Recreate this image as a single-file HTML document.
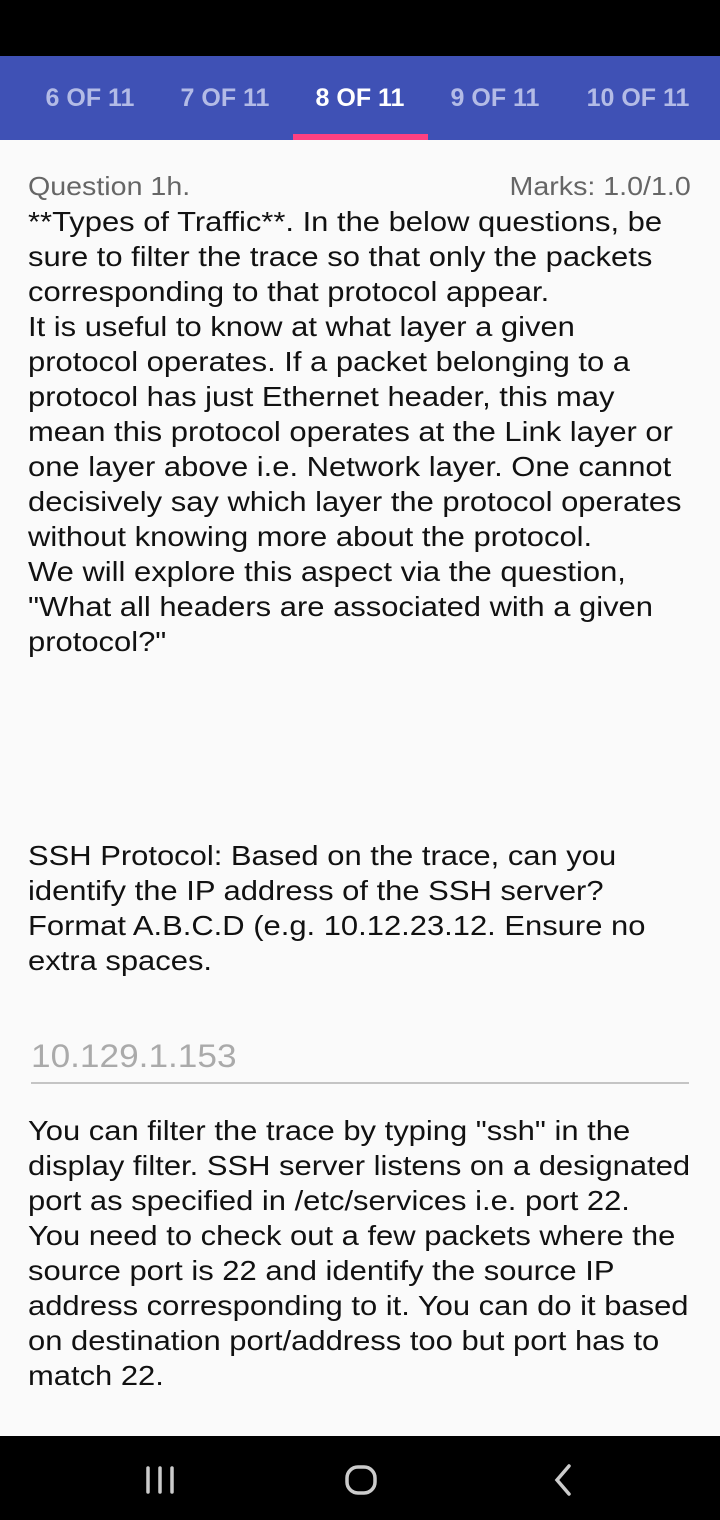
<!DOCTYPE html>
<html><head><style>
*{margin:0;padding:0;box-sizing:border-box}
body{width:720px;height:1520px;background:#fafafa;position:relative;overflow:hidden;font-family:"Liberation Sans",sans-serif}
.top{position:absolute;left:0;top:0;width:720px;height:56px;background:#000}
.tabs{position:absolute;left:0;top:56px;width:720px;height:84px;background:#3f51b5}
.tab{position:absolute;top:0;height:84px;line-height:84px;font-size:25px;color:#b3bbe6;font-weight:bold;transform:translateX(-50%);white-space:nowrap}
.tab.on{color:#fff}
.ind{position:absolute;left:293px;top:134px;width:135px;height:6px;background:#ff4081}
.l{position:absolute;left:28px;font-size:28px;line-height:35px;color:#111;white-space:nowrap;transform-origin:0 50%;transform:scaleX(1.105)}
.g{color:#666;font-size:26px;transform:scaleX(1.1)}
.r{transform-origin:100% 50%}
.nav{position:absolute;left:0;top:1436px;width:720px;height:84px;background:#000}
</style></head><body>
<div class="top"></div>
<div class="tabs">
<div class="tab" style="left:90px">6 OF 11</div>
<div class="tab" style="left:225px">7 OF 11</div>
<div class="tab on" style="left:360px">8 OF 11</div>
<div class="tab" style="left:495px">9 OF 11</div>
<div class="tab" style="left:638px">10 OF 11</div>
</div>
<div class="ind"></div>
<div class="l g" style="top:169px">Question 1h.</div>
<div class="l g r" style="top:169px;left:auto;right:29px">Marks: 1.0/1.0</div>
<div class="l" style="top:204px">**Types of Traffic**. In the below questions, be</div>
<div class="l" style="top:239px">sure to filter the trace so that only the packets</div>
<div class="l" style="top:274px">corresponding to that protocol appear.</div>
<div class="l" style="top:309px">It is useful to know at what layer a given</div>
<div class="l" style="top:344px">protocol operates. If a packet belonging to a</div>
<div class="l" style="top:379px">protocol has just Ethernet header, this may</div>
<div class="l" style="top:414px">mean this protocol operates at the Link layer or</div>
<div class="l" style="top:449px">one layer above i.e. Network layer. One cannot</div>
<div class="l" style="top:484px">decisively say which layer the protocol operates</div>
<div class="l" style="top:519px">without knowing more about the protocol.</div>
<div class="l" style="top:554px">We will explore this aspect via the question,</div>
<div class="l" style="top:589px">"What all headers are associated with a given</div>
<div class="l" style="top:624px">protocol?"</div>
<div class="l" style="top:838px">SSH Protocol: Based on the trace, can you</div>
<div class="l" style="top:873px">identify the IP address of the SSH server?</div>
<div class="l" style="top:908px">Format A.B.C.D (e.g. 10.12.23.12. Ensure no</div>
<div class="l" style="top:943px">extra spaces.</div>
<div class="l" style="top:1039px;left:31px;color:#aaa;font-size:32px;transform:scaleX(1.1)">10.129.1.153</div>
<div style="position:absolute;left:31px;top:1082px;width:658px;height:2px;background:#c4c4c4"></div>
<div class="l" style="top:1113px">You can filter the trace by typing "ssh" in the</div>
<div class="l" style="top:1148px">display filter. SSH server listens on a designated</div>
<div class="l" style="top:1183px">port as specified in /etc/services i.e. port 22.</div>
<div class="l" style="top:1218px">You need to check out a few packets where the</div>
<div class="l" style="top:1253px">source port is 22 and identify the source IP</div>
<div class="l" style="top:1288px">address corresponding to it. You can do it based</div>
<div class="l" style="top:1323px">on destination port/address too but port has to</div>
<div class="l" style="top:1358px">match 22.</div>
<div class="nav">
<svg width="720" height="84" style="position:absolute;left:0;top:0">
<g stroke="#ccc" stroke-width="3.5" fill="none" stroke-linecap="round">
<line x1="148" y1="32" x2="148" y2="56"/><line x1="160" y1="32" x2="160" y2="56"/><line x1="172" y1="32" x2="172" y2="56"/>
<rect x="347" y="31" width="28" height="26" rx="11"/>
<polyline points="569,30 557,44 569,58"/>
</g></svg>
</div>
</body></html>
